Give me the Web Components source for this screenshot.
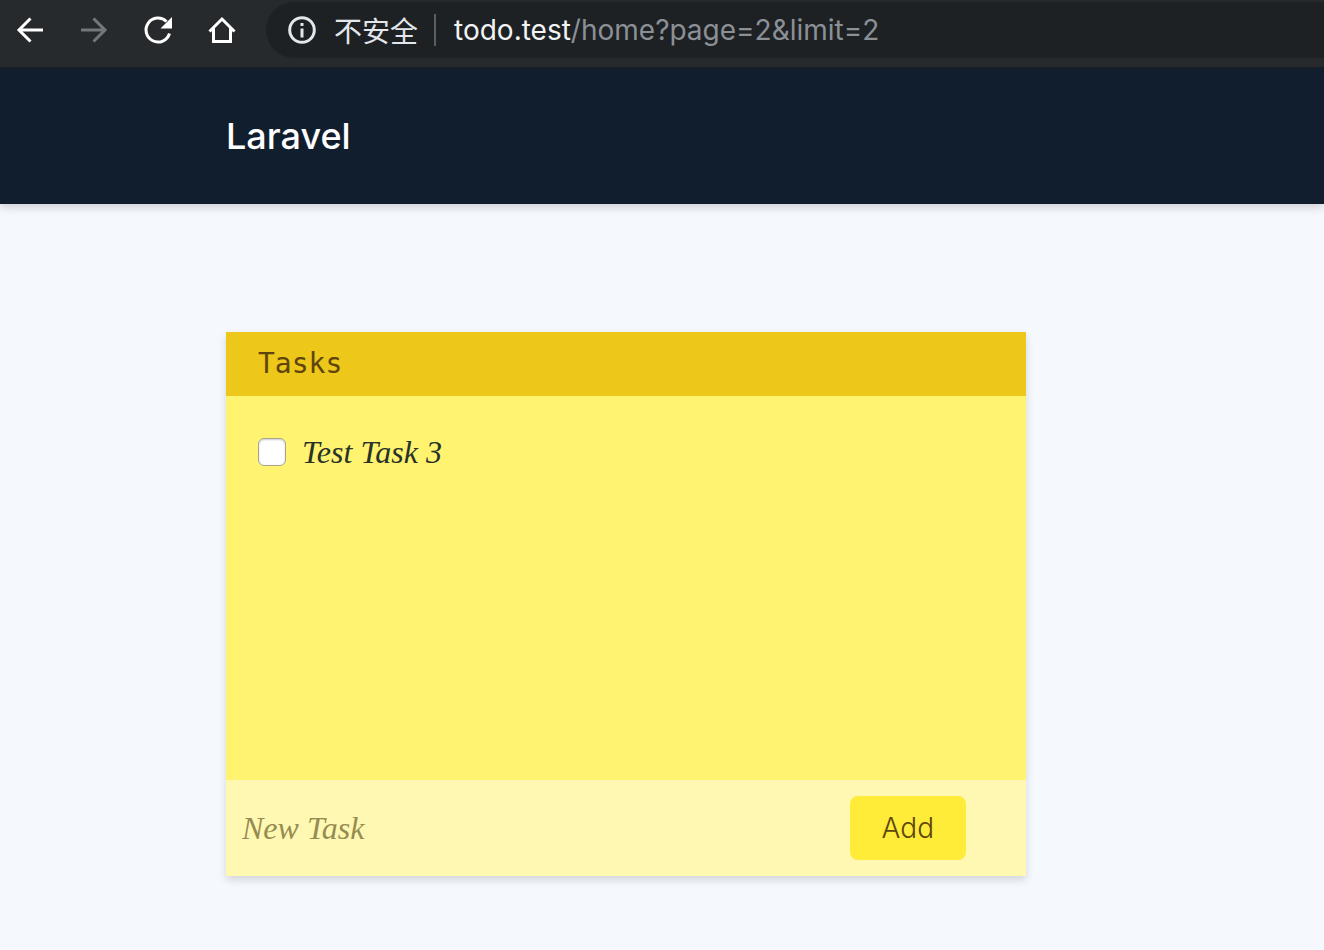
<!DOCTYPE html>
<html lang="en">
<head>
<meta charset="utf-8">
<meta name="viewport" content="width=device-width, initial-scale=1">
<title>Laravel</title>
<style>
  body {
    margin: 0;
    min-height: 100vh;
    background: #f5f8fc;
    font-family: Inter, "Liberation Sans", sans-serif;
    --gutter: 226px;
  }
</style>
</head>
<body>
  <browser-bar></browser-bar>
  <site-header><a href="/">Laravel</a></site-header>
  <task-board>
    <span slot="title">Tasks</span>
    <task-item>Test Task 3</task-item>
    <task-form slot="footer"></task-form>
  </task-board>

<script>
function makeTemplate(html) {
  const template = document.createElement('template');
  template.innerHTML = html;
  return template;
}

// attaches a copy of the template when the element is created
function define(name, template) {
  customElements.define(name, class extends HTMLElement {
    constructor() {
      super();
      this.attachShadow({ mode: 'open' }).appendChild(template.content.cloneNode(true));
    }
  });
}

define('browser-bar', makeTemplate(`
  <style>
    :host {
      display: flex;
      align-items: center;
      height: 60px;
      padding-bottom: 7px;
      border-bottom: 1px solid #1d2022;
      background: #272a2c;
      color: #fff;
    }
    nav {
      display: flex;
      padding: 0 28px 0 14px;
      gap: 32px;
    }
    button {
      display: block;
      width: 32px;
      height: 32px;
      padding: 0;
      border: 0;
      background: none;
      color: inherit;
    }
    button:disabled {
      color: #74777a;
    }
    svg {
      display: block;
      flex: none;
      fill: none;
      stroke: currentColor;
      stroke-width: 3;
    }
    .address {
      display: flex;
      flex: 1;
      align-items: center;
      box-sizing: border-box;
      height: 56px;
      padding-left: 22px;
      border-radius: 28px 0 0 28px;
      background: #1e2123;
      color: #f1f3f4;
      font-size: 28px;
      line-height: 40px;
      white-space: nowrap;
    }
    .address svg {
      color: #e3e6ea;
    }
    .security {
      margin: 0 16px 0 18px;
      color: #e3e6ea;
      font-family: "Noto Sans CJK SC", sans-serif;
    }
    .divider {
      width: 2px;
      height: 32px;
      margin-right: 18px;
      background: #5b5e61;
    }
    .path {
      color: #8b9096;
    }
  </style>
  <nav>
    <button aria-label="Back">
      <svg width="32" height="32" viewBox="0 0 32 32"><path d="M29 16H5M16.500 4.500L5 16l11.500 11.500"/></svg>
    </button>
    <button aria-label="Forward" disabled>
      <svg width="32" height="32" viewBox="0 0 32 32"><path d="M3 16h24M15.500 4.500L27 16 15.500 27.500"/></svg>
    </button>
    <button aria-label="Reload">
      <svg width="32" height="32" viewBox="0 0 32 32"><path d="M27.500 19.500A12 12 0 1 1 24.500 7.500"/><path d="M30 3v11.500H18.500z" fill="currentColor" stroke="none"/></svg>
    </button>
    <button aria-label="Home">
      <svg width="32" height="32" viewBox="0 0 32 32"><path d="M3.500 17.500L16 5l12.500 12.500M7.500 14.500v13h17v-13"/></svg>
    </button>
  </nav>
  <div class="address">
    <svg width="28" height="28" viewBox="0 0 28 28"><circle cx="14" cy="14" r="12.300"/><path d="M14 12.500v9M14 7v3"/></svg>
    <span class="security" lang="zh-CN">不安全</span>
    <span class="divider"></span>
    <span>todo.test<span class="path">/home?page=2&amp;limit=2</span></span>
  </div>
`));

define('site-header', makeTemplate(`
  <style>
    :host {
      display: block;
      padding: 44px var(--gutter);
      background: #111e2d;
      box-shadow: 0 4px 8px rgba(0, 0, 0, .14);
    }
    ::slotted(a) {
      color: #fff;
      font-size: 36px;
      font-weight: 500;
      line-height: 48px;
      text-decoration: none;
    }
  </style>
  <slot></slot>
`));

define('task-board', makeTemplate(`
  <style>
    :host {
      display: block;
      padding: 128px 32px 64px var(--gutter);
    }
    section {
      max-width: 800px;
      background: #fff370;
      box-shadow: 0 4px 8px rgba(0, 0, 0, .14);
    }
    h2 {
      margin: 0;
      padding: 12px 32px;
      background: #eec71b;
      color: #5e450c;
      font: 28px/40px "DejaVu Sans Mono", monospace;
    }
    .list {
      min-height: 320px;
      padding: 32px;
    }
  </style>
  <section>
    <h2><slot name="title"></slot></h2>
    <div class="list"><slot></slot></div>
    <slot name="footer"></slot>
  </section>
`));

define('task-item', makeTemplate(`
  <style>
    :host {
      display: block;
      color: #283228;
      font: italic 32px/48px "Liberation Serif", serif;
    }
    label {
      display: flex;
      align-items: center;
      gap: 16px;
    }
    input {
      appearance: none;
      box-sizing: border-box;
      width: 28px;
      height: 28px;
      margin: 0;
      border: 1px solid #a5a391;
      border-radius: 6px;
      background: #fff;
      box-shadow: inset 0 1px 2px rgba(0, 0, 0, .2);
    }
    input:checked {
      background: #5e450c;
    }
  </style>
  <label><input type="checkbox"><span><slot></slot></span></label>
`));

define('task-form', makeTemplate(`
  <style>
    :host {
      display: block;
      background: #fff8b3;
    }
    form {
      display: flex;
      align-items: center;
      padding: 16px 60px 16px 0;
    }
    input {
      flex: 1;
      min-width: 0;
      padding: 8px 16px;
      border: 0;
      background: none;
      color: #283228;
      font: italic 32px/48px "Liberation Serif", serif;
    }
    input::placeholder {
      color: #968c50;
      opacity: 1;
    }
    button {
      padding: 12px 32px;
      border: 0;
      border-radius: 8px;
      background: #ffec38;
      color: #5e450c;
      font: 300 28px/40px Inter, sans-serif;
    }
  </style>
  <form>
    <input type="text" placeholder="New Task" aria-label="New Task">
    <button type="button">Add</button>
  </form>
`));
</script>
</body>
</html>
